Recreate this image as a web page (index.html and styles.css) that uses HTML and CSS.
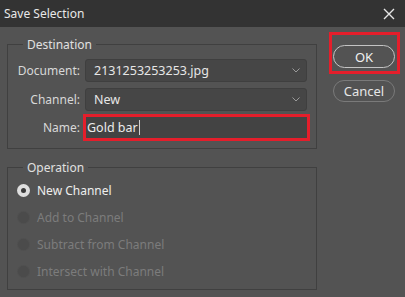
FILE: index.html
```html
<!doctype html>
<html>
<head>
<meta charset="utf-8">
<title>Save Selection</title>
<link rel="stylesheet" href="styles.css">
</head>
<body>
	<div class="titlebar">
		<span class="title">Save Selection</span>
		<svg class="close" width="12" height="12" viewBox="0 0 12 12"><path d="M1 1L11 11M11 1L1 11" stroke="#e6e6e6" stroke-width="1.4"/></svg>
	</div>
	<div class="main">
		<div class="left">
			<fieldset class="group dest">
				<legend>Destination</legend>
				<div class="row">
					<label>Document:</label>
					<div class="select">2131253253253.jpg<svg class="chev" width="8" height="5" viewBox="0 0 8 5"><path d="M0.5 0.5L4 4L7.5 0.5" fill="none" stroke="#9a9a9a" stroke-width="1"/></svg></div>
				</div>
				<div class="row">
					<label>Channel:</label>
					<div class="select">New<svg class="chev" width="8" height="5" viewBox="0 0 8 5"><path d="M0.5 0.5L4 4L7.5 0.5" fill="none" stroke="#9a9a9a" stroke-width="1"/></svg></div>
				</div>
				<div class="row name-row">
					<label>Name:</label>
					<div class="input">Gold bar<span class="caret"></span></div>
				</div>
			</fieldset>
			<fieldset class="group op">
				<legend>Operation</legend>
				<div class="radio on"><span class="dot"></span>New Channel</div>
				<div class="radio off"><span class="dot"></span>Add to Channel</div>
				<div class="radio off"><span class="dot"></span>Subtract from Channel</div>
				<div class="radio off"><span class="dot"></span>Intersect with Channel</div>
			</fieldset>
		</div>
		<div class="right">
			<div class="mark">
				<div class="btn ok">OK</div>
			</div>
			<div class="btn cancel">Cancel</div>
		</div>
	</div>
</body>
</html>
```
FILE: styles.css
```css
*{ margin:0; padding:0; box-sizing:border-box; }
body{ width:405px; height:297px; overflow:hidden; background:#535353; color:#dcdcdc; font-family:"Noto Sans", "Open Sans", sans-serif; font-size:12px; }
.titlebar{ height:27px; background:#333333; display:flex; align-items:center; justify-content:space-between; padding:0 10px 0 4px; }
.title{ font-size:12px; color:#e8e8e8; }
.main{ display:flex; }
.left{ padding-left:7px; width:317px; }
.group{ border:1px solid #404040; padding:0 9px 0 0; }
.group legend{ margin-left:15px; padding:0 4px; line-height:17px; font-size:12px; color:#e0e0e0; }
.dest{ margin-top:9px; padding-top:6px; padding-bottom:7px; }
.row{ display:flex; align-items:center; margin-bottom:6px; }
.row label{ width:72px; text-align:right; color:#d8d8d8; }
.select{ margin-left:5px; width:222px; height:23px; background:#464646; border:1px solid #3f3f3f; border-radius:3px; padding-left:8px; display:flex; align-items:center; justify-content:space-between; padding-right:6px; color:#e6e6e6; font-size:12.5px; }
.name-row{ margin-top:-3px; margin-bottom:0; }
.input{ margin-left:6px; width:221px; height:21px; background:#434343; outline:3px solid #e41e2b; margin-top:3px; margin-bottom:3px; padding-left:1px; display:flex; align-items:center; color:#ececec; font-size:12.5px; }
.caret{ width:1px; height:15px; background:#d0d0d0; margin-left:1px; }
.op{ margin-top:10px; padding-top:1px; padding-bottom:3px; height:131px; }
.radio{ height:27px; display:flex; align-items:center; padding-left:9px; font-size:12px; }
.radio .dot{ width:13px; height:13px; border-radius:50%; margin-right:7px; display:flex; align-items:center; justify-content:center; }
.on{ color:#eeeeee; }
.on .dot{ background:#dedede; }
.on .dot::after{ content:""; width:5px; height:5px; border-radius:50%; background:#3a3a3a; }
.off{ color:#7c7c7c; }
.off .dot{ background:#4b4b4b; border:1px solid #505050; }
.right{ padding-left:12px; padding-top:5px; display:flex; flex-direction:column; }
.mark{ width:71px; height:42px; border:3px solid #e41e2b; padding:10px 0 0 1px; }
.btn{ width:62px; height:23px; border-radius:12px; display:flex; align-items:center; justify-content:center; font-size:13px; color:#f0f0f0; }
.ok{ border:1.5px solid #c4c4c4; }
.cancel{ margin-top:6px; margin-left:4px; height:22px; border:1px solid #7a7a7a; color:#e6e6e6; }
```
